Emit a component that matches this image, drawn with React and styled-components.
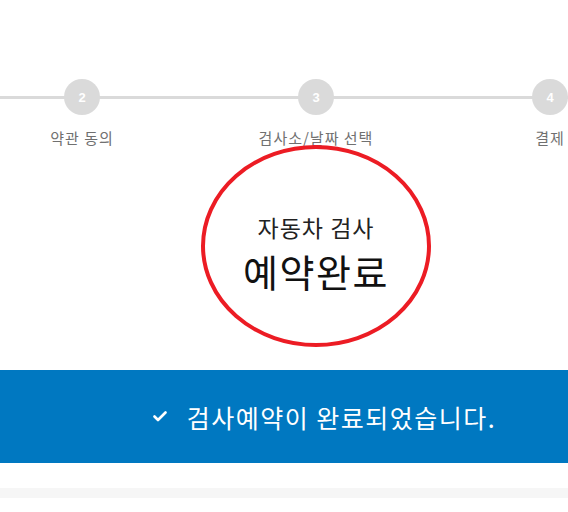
import React from 'react';
import styled, { createGlobalStyle } from 'styled-components';

const GlobalStyle = createGlobalStyle`
	html, body {
		margin:0;
		padding:0;
		background:#fff;
		overflow:hidden;
	}
	body {
		font-family:"Noto Sans CJK KR", "Liberation Sans", sans-serif;
	}
`

const Page = styled.div`
	width:632px;
	min-height:512px;
	background:#fff;
`

const StepperWrap = styled.section`
	padding-top:79px;
	display:flex;
	justify-content:center;
	overflow:hidden;
`

const Track = styled.ol`
	position:relative;
	flex:none;
	display:flex;
	margin:0;
	padding:0;
	list-style:none;

	&::before{
		content:"";
		position:absolute;
		left:0;
		right:0;
		top:17px;
		height:3px;
		background:#dadada;
	}
`

const Step = styled.li`
	width:234px;
	display:flex;
	flex-direction:column;
	align-items:center;
	position:relative;
`

const Dot = styled.span`
	width:36px;
	height:36px;
	border-radius:50%;
	background:${props => props.$active ? '#0078c1' : '#dadada'};
	color:#fff;
	font-family:"Liberation Sans", Arial, sans-serif;
	font-weight:700;
	font-size:13px;
	display:flex;
	align-items:center;
	justify-content:center;
`

const StepLabel = styled.span`
	margin-top:13px;
	font-size:15px;
	line-height:20px;
	letter-spacing:1px;
	color:#707070;
	white-space:nowrap;
`

const TitleSection = styled.section`
	position:relative;
	height:222px;
	display:flex;
	flex-direction:column;
	align-items:center;
	padding-top:64px;
	box-sizing:border-box;
`

const SubTitle = styled.p`
	margin:0;
	font-size:23px;
	line-height:30px;
	letter-spacing:1px;
	color:#222;
`

const MainTitle = styled.h1`
	margin:6px 0 0;
	font-size:38px;
	line-height:46px;
	letter-spacing:1.5px;
	font-weight:400;
	color:#111;
`

const Mark = styled.svg`
	position:absolute;
	top:-7px;
	left:50%;
	margin-left:-120px;
	pointer-events:none;
`

const Banner = styled.div`
	height:93px;
	background:#0078c1;
	display:flex;
	align-items:center;
	justify-content:center;
	padding-left:17px;
	color:#fff;
`

const CheckIcon = styled.svg`
	width:14px;
	height:11px;
	margin-right:20px;
	flex:none;
`

const BannerText = styled.span`
	font-size:25px;
	line-height:32px;
	letter-spacing:1.5px;
`

const GrayStrip = styled.div`
	margin-top:25px;
	height:10px;
	background:#f6f6f6;
`

const steps = [
	{ no: 1, label: '본인 인증' },
	{ no: 2, label: '약관 동의' },
	{ no: 3, label: '검사소/날짜 선택' },
	{ no: 4, label: '결제' },
	{ no: 5, label: '예약 완료' },
]

const App = () => {
	return (
		<Page>
			<GlobalStyle />
			<StepperWrap>
				<Track>
					{steps.map(s => (
						<Step key={s.no}>
							<Dot>{s.no}</Dot>
							<StepLabel>{s.label}</StepLabel>
						</Step>
					))}
				</Track>
			</StepperWrap>

			<TitleSection>
				<SubTitle>자동차 검사</SubTitle>
				<MainTitle>예약완료</MainTitle>
				<Mark width="240" height="210" viewBox="0 0 240 210">
					<ellipse cx="120" cy="105" rx="113" ry="99" fill="none" stroke="#ec1c24" strokeWidth="4" />
				</Mark>
			</TitleSection>

			<Banner>
				<CheckIcon viewBox="0 0 14 11">
					<path d="M1.5 5.5 L5 9 L12.5 1.5" fill="none" stroke="#fff" strokeWidth="2.6" strokeLinecap="round" strokeLinejoin="round" />
				</CheckIcon>
				<BannerText>검사예약이 완료되었습니다.</BannerText>
			</Banner>

			<GrayStrip />
		</Page>
	);
};

export default App;
